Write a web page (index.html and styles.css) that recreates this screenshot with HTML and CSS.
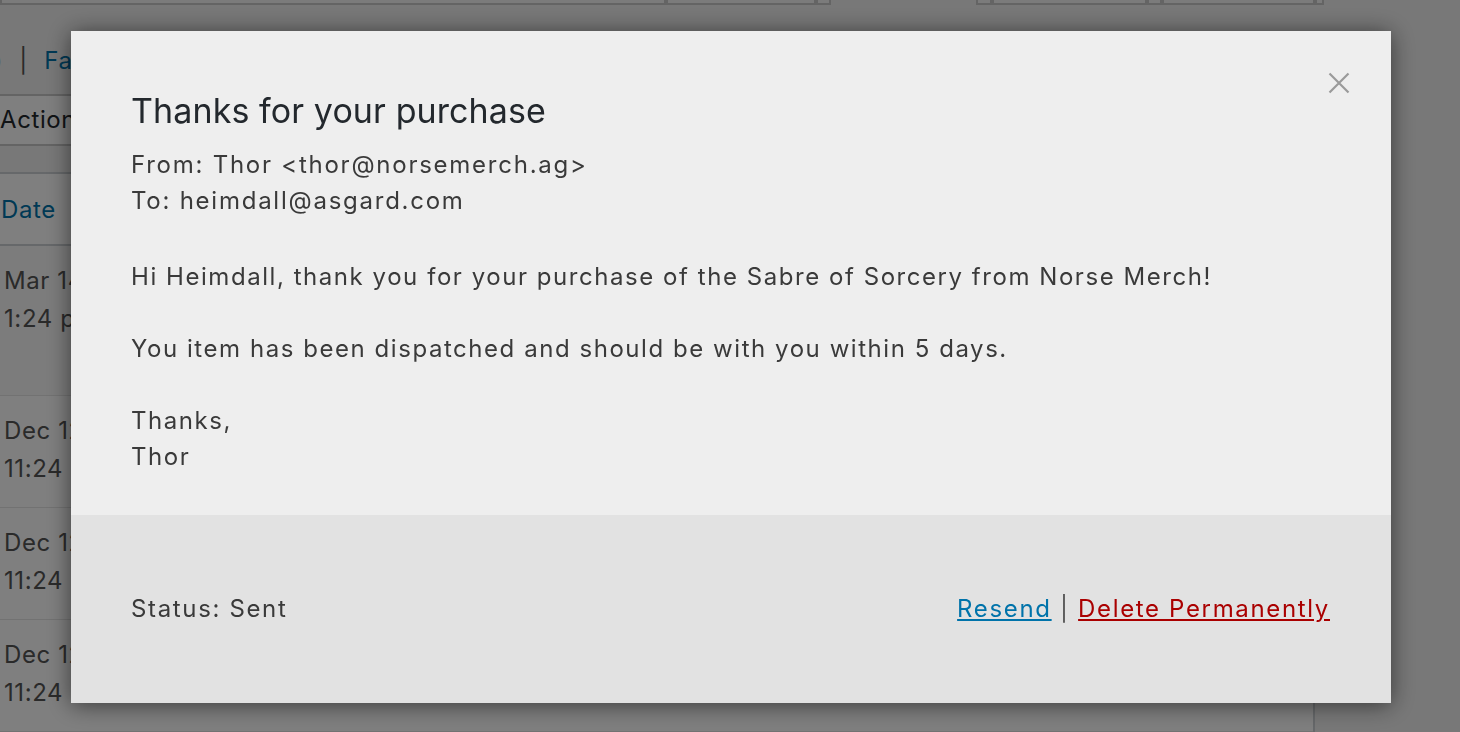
FILE: index.html
```html
<!DOCTYPE html>
<html>
<head>
<meta charset="utf-8">
<link rel="stylesheet" href="styles.css">
</head>
<body>
<div class="wp">
  <div class="topbar">
    <div class="tb w666"></div><div class="tb w150"></div><div class="tb w15"></div>
    <div class="gap145"></div>
    <div class="tb w16"></div><div class="tb w155"></div><div class="tb w15"></div><div class="tb w153"></div><div class="tb w9"></div>
  </div>
  <div class="subsub"><span class="cur">Sent (4)</span> <span class="sep">|</span> <a class="lnk">Failed (0)</a></div>
  <div class="tablenav"><div class="bulk">Actions</div></div>
  <div class="list">
    <div class="row head"><a class="lnk">Date</a></div>
    <div class="row first"><div>Mar 14, 2018</div><div>1:24 pm</div></div>
    <div class="row"><div>Dec 12, 2017</div><div>11:24 am</div></div>
    <div class="row"><div>Dec 12, 2017</div><div>11:24 am</div></div>
    <div class="row"><div>Dec 12, 2017</div><div>11:24 am</div></div>
  </div>
</div>
<div class="overlay"></div>
<div class="modal">
  <button class="close" aria-label="Close">
    <svg width="22" height="22" viewBox="0 0 22 22"><path d="M1.5 1.5 L20.5 20.5 M20.5 1.5 L1.5 20.5" stroke="#9a9a9a" stroke-width="2.2" fill="none"/></svg>
  </button>
  <div class="mbody">
    <h1 class="title">Thanks for your purchase</h1>
    <div class="meta">
      <div>From: Thor &lt;thor@norsemerch.ag&gt;</div>
      <div>To: heimdall@asgard.com</div>
    </div>
    <div class="msg">
      <p>Hi Heimdall, thank you for your purchase of the Sabre of Sorcery from Norse Merch!</p>
      <p>You item has been dispatched and should be with you within 5 days.</p>
      <p>Thanks,<br>Thor</p>
    </div>
  </div>
  <div class="mfoot">
    <div class="status">Status: Sent</div>
    <div class="actions"><a class="resend" href="#">Resend</a> <span class="bar">|</span> <a class="delete" href="#">Delete Permanently</a></div>
  </div>
</div>
</body>
</html>
```
FILE: styles.css
```css
html, body { margin: 0; padding: 0; }
body {
  background: #f1f1f1;
  font-family: Inter, "Noto Sans", "Liberation Sans", sans-serif;
  color: #23282d;
  width: 1460px;
  height: 732px;
  overflow: hidden;
}
.wp { position: relative; }
.topbar { display: flex; height: 5px; margin-bottom: 36px; }
.tb { height: 3px; border: 2px solid #c8c8c8; border-top: none; background: #f7f7f7; box-sizing: content-box; }
.w666 { width: 662px; }
.w150 { width: 146px; }
.w15 { width: 11px; }
.w16 { width: 12px; }
.w155 { width: 151px; }
.w153 { width: 149px; }
.w9 { width: 5px; }
.gap145 { width: 145px; }
.subsub { font-size: 24px; line-height: 40px; height: 40px; margin-left: -93px; color: #555; letter-spacing: 0.6px; white-space: nowrap; }
.sep { margin: 0 9px; color: #555; }
.lnk { color: #0073aa; }
.tablenav { margin-top: 13px; height: 54px; }
.bulk {
  width: 300px; height: 52px; box-sizing: border-box;
  border-top: 2px solid #c8c8c8; border-bottom: 2px solid #c8c8c8;
  background: #fff; font-size: 24px; line-height: 48px; padding-left: 0; color: #23282d; letter-spacing: 0.6px;
}
.list { margin-top: 24px; width: 1315px; background: #fff; border-top: 2px solid #ccd0d4; border-right: 2px solid #ccd0d4; box-sizing: border-box; }
.row { height: 112px; box-sizing: border-box; border-bottom: 1px solid #e5e5e5; padding: 16px 4px; font-size: 24px; line-height: 38px; color: #555; letter-spacing: 0.6px; }
.row.head { height: 72px; padding: 17px 1px; border-bottom: 2px solid #ccd0d4; }
.row.first { height: 150px; background: #f9f9f9; }
.overlay { position: fixed; inset: 0; background: rgba(0,0,0,0.5); }
.modal {
  position: fixed; left: 71px; top: 31px; width: 1320px; height: 672px;
  display: flex; flex-direction: column;
  background: #eeeeee;
  box-shadow: 0 2px 22px rgba(0,0,0,0.55);
}
.close {
  position: absolute; top: 41px; right: 41px; width: 22px; height: 22px;
  padding: 0; border: none; background: none; cursor: pointer;
}
.close svg { display: block; }
.mbody { flex: 1; padding: 60px 60px 40px; color: #3a3a3a; }
.title { margin: 0; font-size: 34px; font-weight: 400; line-height: 40px; color: #23282d; letter-spacing: 0.1px; }
.meta { margin-top: 16px; font-size: 24px; line-height: 36px; letter-spacing: 1.75px; }
.msg { margin-top: 40px; font-size: 24px; line-height: 36px; letter-spacing: 1.55px; }
.msg p { margin: 0 0 36px; }
.msg p:last-child { margin-bottom: 0; }
.mfoot {
  height: 188px; flex: none; background: #e2e2e2;
  display: flex; align-items: center; justify-content: space-between;
  padding: 0 61px 0 60px; font-size: 24px; line-height: 36px; color: #3a3a3a; letter-spacing: 1.65px;
}
.resend { color: #0073aa; }
.delete { color: #a00; }
.bar { color: #555; margin: 0; }
```
